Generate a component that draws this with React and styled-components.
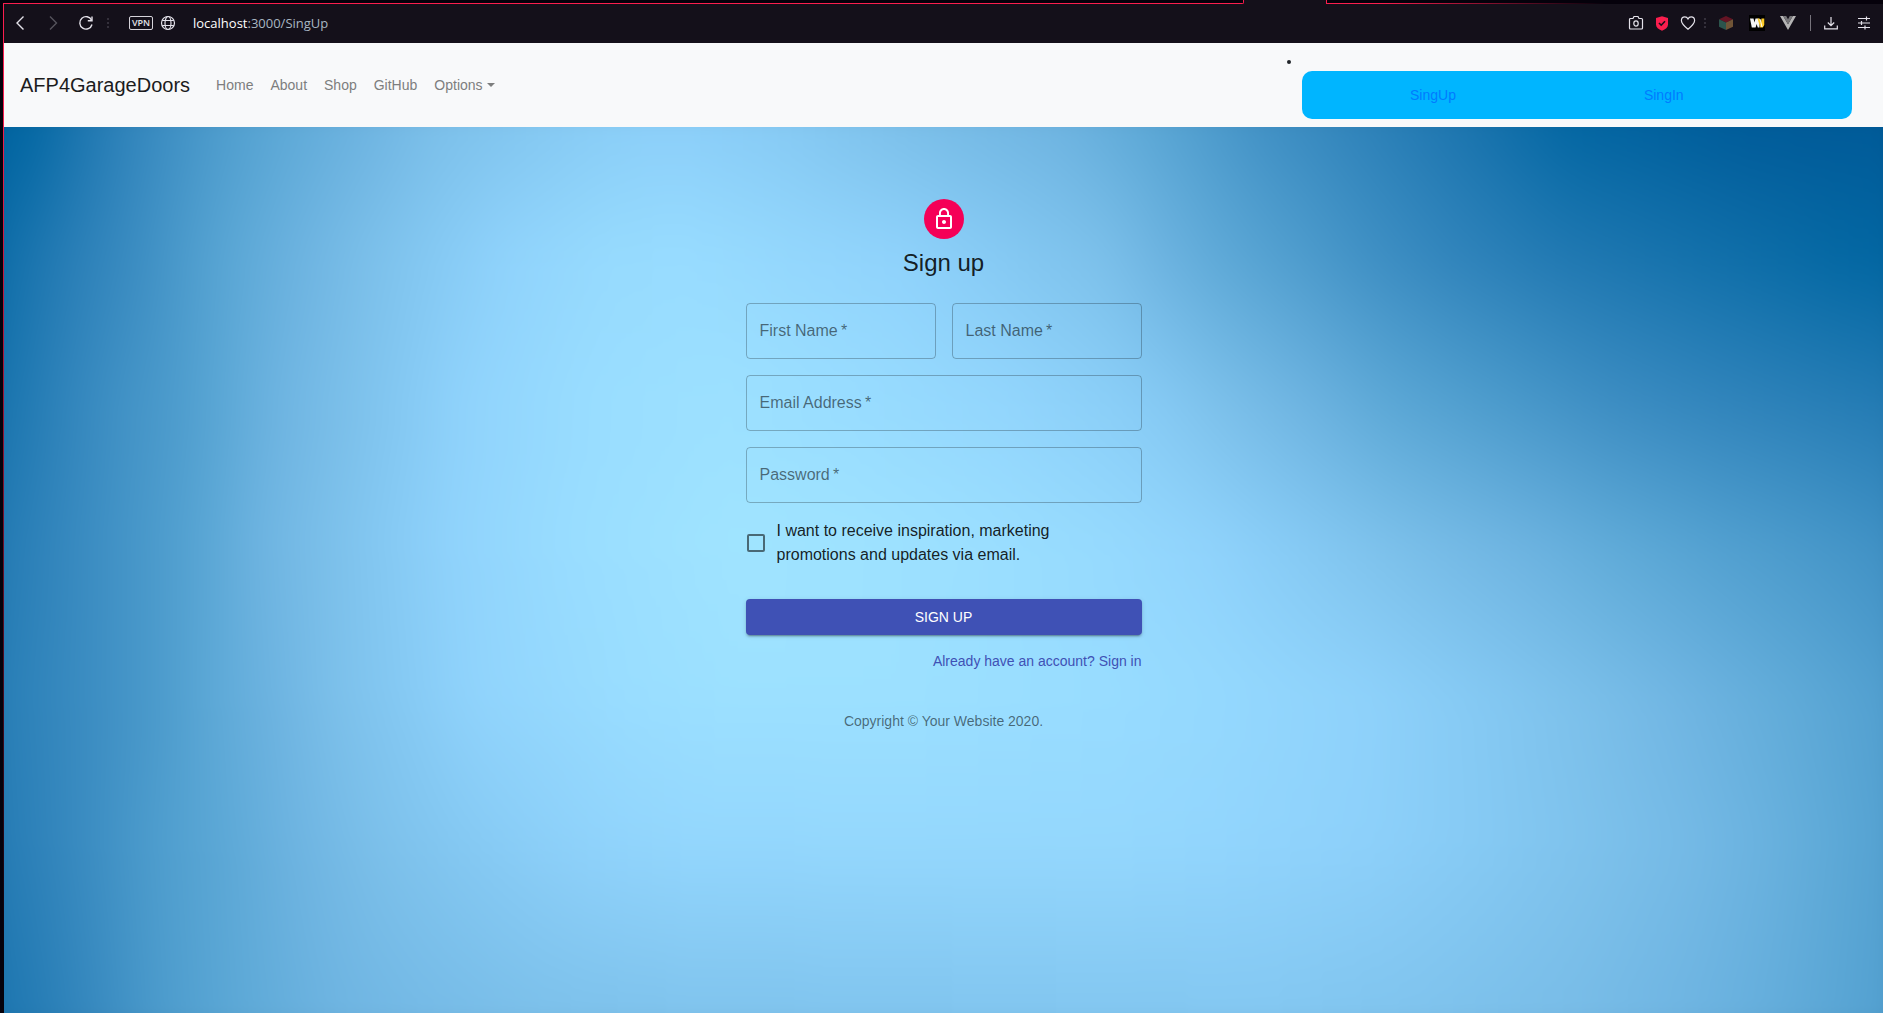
import React from "react";
import styled, { createGlobalStyle } from "styled-components";

const GlobalStyle = createGlobalStyle`
  *, *::before, *::after { box-sizing: border-box; }
  body {
    margin: 0;
    background: #05010b;
    font-family: "Liberation Sans", Arial, sans-serif;
    font-size: 14px;
    line-height: 20px;
    color: #212529;
  }
  button { font: inherit; border: 0; padding: 0; background: none; cursor: pointer; }
  a { text-decoration: none; }
  ul { list-style: none; margin: 0; padding: 0; }
`;

/* ---------- browser window ---------- */

const Window = styled.div`
  min-height: 100vh;
  display: flex;
  flex-direction: column;
`;

const TabStrip = styled.div`
  display: flex;
  height: 4px;
  padding-left: 3px;
`;

const TabsBefore = styled.div`
  width: 66%;
  border: solid #fa1e4e;
  border-width: 0 1px 1px 0;
  border-bottom-right-radius: 2px;
`;

const ActiveTab = styled.div`
  width: 82px;
  background: #14101a;
`;

const TabsAfter = styled.div`
  flex: 1;
  border-left: 1px solid #fa1e4e;
  background: linear-gradient(90deg, #fa1e4e 10%, #05010b 50%) bottom / 100% 1px no-repeat;
`;

const WindowBody = styled.div`
  flex: 1;
  display: grid;
  grid-template-columns: 4px minmax(0, 1fr);
`;

const WindowEdge = styled.div`
  background: linear-gradient(#fa1e4e 10%, #5a0c22 60%, #05010b 95%) right / 1px 100% no-repeat;
`;

const Viewport = styled.div`
  display: flex;
  flex-direction: column;
`;

const Toolbar = styled.div`
  display: flex;
  align-items: center;
  justify-content: space-between;
  height: 39px;
  padding: 0 11px 1px 8px;
  background: #14101a;
  color: #e4e2ea;
`;

const ToolGroup = styled.div`
  display: flex;
  align-items: center;
  gap: ${(p) => p.$gap}px;
`;

const ToolButton = styled.button`
  display: flex;
  width: 16px;
  height: 16px;
  color: ${(p) => (p.$dim ? "#56535c" : "#e4e2ea")};

  svg { width: 16px; height: 16px; display: block; }
`;

const Dots = styled.span`
  width: 2px;
  height: 10px;
  background: repeating-linear-gradient(#34303b 0 2px, transparent 2px 4px);
`;

const Divider = styled.span`
  width: 1px;
  height: 16px;
  background: #77747c;
`;

const VpnBadge = styled.button`
  width: 24px;
  height: 14px;
  border: 1px solid #d5d3da;
  border-radius: 2px;
  color: #e4e2ea;
  font-family: "Open Sans", sans-serif;
  font-size: 9px;
  font-weight: 600;
  line-height: 12px;
`;

const Address = styled.div`
  font-family: "Open Sans", "Noto Sans", sans-serif;
  font-size: 13px;
  color: #a9b6c2;

  strong { font-weight: 400; color: #ffffff; }
`;

/* ---------- site navigation ---------- */

const NavBar = styled.nav`
  display: flex;
  align-items: center;
  justify-content: space-between;
  padding: 8px 31px 8px 16px;
  background: #f8f9fa;
`;

const NavLeft = styled.div`
  display: flex;
  align-items: center;
  gap: 18px;
`;

const Brand = styled.a`
  font-size: 20px;
  line-height: 30px;
  color: #1c1c1d;
`;

const NavList = styled.ul`
  display: flex;
  gap: 1px;
`;

const NavLink = styled.a`
  display: flex;
  align-items: center;
  gap: 4px;
  padding: 8px;
  color: #7d7e7e;
`;

const Caret = styled.span`
  border: solid transparent;
  border-width: 4px 4px 0;
  border-top-color: currentColor;
`;

const Account = styled.div`
  display: flex;
  align-items: flex-start;
  gap: 11px;
`;

const Bullet = styled.span`
  width: 4px;
  height: 4px;
  margin-top: 9px;
  border-radius: 50%;
  background: #212529;
`;

const AccountLinks = styled.div`
  display: flex;
  align-items: center;
  gap: 188px;
  width: 550px;
  height: 48px;
  margin-top: 20px;
  padding-left: 108px;
  border-radius: 10px;
  background: #00b5ff;

  a { color: #007bff; }
`;

/* ---------- sign-up page ---------- */

const Page = styled.main`
  position: relative;
  isolation: isolate;
  flex: 1;
  padding: 72px 16px 80px;
`;

const Backdrop = styled.div`
  position: absolute;
  inset: 0;
  z-index: -1;
  overflow: hidden;
`;

/* Reaches past the page on every side so that the softened rim stays out of view. */
const SoftLayer = styled.div`
  position: absolute;
  inset: -40px;
  filter: blur(20px);
`;

const Sheet = styled.div`
  position: absolute;
  inset: 0;
  background: ${(p) => p.$fill};
  mask-image: ${(p) => p.$mask};
`;

const Card = styled.div`
  width: 100%;
  max-width: 396px;
  margin: 0 auto;
  display: flex;
  flex-direction: column;
  align-items: center;
`;

const Avatar = styled.div`
  display: grid;
  place-items: center;
  width: 40px;
  height: 40px;
  border-radius: 50%;
  background: #f50057;

  svg { width: 24px; height: 24px; fill: #ffffff; }
`;

const Title = styled.h1`
  margin: 8px 0 24px;
  font-size: 24px;
  line-height: 32px;
  font-weight: 400;
  color: rgba(0, 0, 0, 0.87);
`;

const Form = styled.form`
  width: 100%;
  display: grid;
  grid-template-columns: 1fr 1fr;
  gap: 16px;
`;

const FieldBox = styled.div`
  display: grid;
  align-items: center;
  grid-column: ${(p) => (p.$wide ? "1 / -1" : "auto")};
`;

const FieldLabel = styled.label`
  grid-area: 1 / 1;
  padding-left: 14px;
  font-size: 16px;
  color: rgba(0, 0, 0, 0.54);
  pointer-events: none;
`;

const FieldInput = styled.input`
  grid-area: 1 / 1;
  width: 100%;
  height: 56px;
  padding: 0 13px;
  border: 1px solid rgba(0, 0, 0, 0.25);
  border-radius: 4px;
  background: transparent;
  font: inherit;
  font-size: 16px;
`;

const Consent = styled.label`
  grid-column: 1 / -1;
  display: flex;
  align-items: center;
  gap: 12px;
  padding-left: 1px;
  font-size: 16px;
  line-height: 24px;
  color: rgba(0, 0, 0, 0.87);

  input {
    appearance: none;
    flex: none;
    width: 18px;
    height: 18px;
    margin: 0;
    border: 2px solid rgba(0, 0, 0, 0.54);
    border-radius: 2px;
  }

  span { max-width: 300px; }
`;

const Submit = styled.button`
  && {
    grid-column: 1 / -1;
    height: 36px;
    margin-top: 16px;
    border-radius: 4px;
    background: #3f51b5;
    color: #ffffff;
    text-transform: uppercase;
    box-shadow: 0 3px 1px -2px rgba(0, 0, 0, 0.2), 0 2px 2px rgba(0, 0, 0, 0.14),
      0 1px 5px rgba(0, 0, 0, 0.12);
  }
`;

const SignInLink = styled.a`
  grid-column: 1 / -1;
  justify-self: end;
  color: #3f51b5;
`;

const Copyright = styled.p`
  margin: 40px 0 0;
  color: rgba(0, 0, 0, 0.54);
`;

/* ---------- backdrop colours ---------- */

const SHADES = [
  [0, 90, 152], [0, 102, 162], [26, 116, 174], [44, 128, 184], [60, 141, 194],
  [76, 155, 204], [92, 168, 214], [110, 180, 225], [124, 192, 234], [134, 202, 244],
  [144, 211, 252], [153, 221, 255], [160, 228, 255],
];

function shade(level) {
  const i = Math.min(Math.floor(level), SHADES.length - 2);
  const t = level - i;
  const c = SHADES[i].map((v, k) => Math.round(v + (SHADES[i + 1][k] - v) * t));
  return `rgb(${c.join(",")})`;
}

// Each row: its height on the backdrop in percent, then [x percent, shade level] stops.
const ROWS = [
  [4, [[0, 0.5], [3, 1], [5.7, 2], [8.5, 3.4], [12.7, 5], [16, 6], [20.5, 7], [24.2, 8], [32, 9.3], [36, 9.7], [41.4, 9.1], [47.8, 8], [56, 7], [60.5, 6], [66.4, 4.3], [71.4, 3.2], [76.5, 2.1], [82, 1.1], [91, 0.2], [100, 0]]],
  [18, [[0, 0.9], [3.2, 2], [5.8, 3], [8.8, 4], [11.2, 5], [13.8, 6], [17.3, 7], [20.7, 8], [24.2, 9], [27.6, 10], [33, 10.8], [37.2, 10.9], [42.5, 10.4], [47.8, 10], [53, 9], [58.4, 8], [61, 7], [64.3, 6.1], [68.5, 5.1], [71.7, 4.3], [76, 3.4], [81.3, 2.5], [87, 1.9], [95.6, 1.2], [100, 0.9]]],
  [33, [[0, 1.6], [2.7, 2.3], [5.3, 3.4], [8.5, 4.5], [10.6, 5], [13.3, 6], [16, 7], [19.6, 8], [22.8, 9], [25.5, 10], [32, 11], [39, 11.6], [45, 11], [53, 10.3], [58.4, 9.5], [61, 9], [64.3, 8], [68.5, 7], [72.8, 6], [78.6, 5], [84, 4.1], [89.8, 3.4], [95.6, 2.8], [100, 2.4]]],
  [48, [[0, 2], [3.2, 3], [6.4, 4], [9.8, 5], [12.7, 6], [15.1, 7], [18.6, 8], [21.8, 9], [25, 10], [31, 11], [39, 12], [45, 11.9], [50.5, 11.4], [58.4, 10.7], [63.7, 10], [67.4, 9.2], [73.3, 8], [79.7, 7], [84, 6.3], [90.3, 5.4], [95.6, 4.7], [100, 4]]],
  [64, [[0, 2.3], [3.2, 3.2], [6.4, 4], [10, 5], [12.5, 6], [16, 7], [19, 8], [22.8, 9], [26, 10], [34, 11], [39, 11.4], [47.8, 11.4], [58.4, 10.9], [63.7, 10.6], [71.7, 9.9], [77, 9], [82.3, 8.1], [87.6, 7.2], [92.4, 6.4], [96, 5.8], [100, 5]]],
  [79, [[0, 2.2], [3.2, 3], [6.4, 4], [10, 5.2], [13.3, 6], [17, 7], [21.2, 8], [26.6, 9], [32, 9.9], [37, 10.3], [47.8, 10.4], [58.4, 10.4], [63.7, 10.2], [71.7, 9.7], [77, 9], [82.8, 8.2], [88, 7.5], [91.9, 6.8], [96, 6], [100, 5.1]]],
  [96, [[0, 1.8], [3.2, 2.5], [6.4, 3.6], [10, 5], [13.8, 6], [19, 7], [23.4, 7.5], [29.7, 8], [37, 8.3], [47.8, 8.4], [58.4, 8.6], [66.4, 8.7], [74.3, 8.3], [82.3, 7.7], [87.6, 7.1], [91.9, 6.5], [96, 5.8], [100, 5]]],
];

function WaterBackdrop() {
  return (
    <Backdrop aria-hidden="true">
      <SoftLayer>
        {ROWS.map(([y, stops], i) => (
          <Sheet
            key={y}
            $fill={`linear-gradient(90deg, ${stops.map(([x, l]) => `${shade(l)} ${x}%`).join(", ")})`}
            $mask={i === 0 ? "none" : `linear-gradient(transparent ${ROWS[i - 1][0]}%, #000 ${y}%)`}
          />
        ))}
      </SoftLayer>
    </Backdrop>
  );
}

/* ---------- icons ---------- */

const Line = ({ children, width = 1.2 }) => (
  <svg viewBox="0 0 16 16" fill="none" stroke="currentColor" strokeWidth={width} aria-hidden="true">
    {children}
  </svg>
);

const icons = {
  back: <Line width={1.4}><path d="M11.5 1.5 5 8l6.5 6.5" /></Line>,
  forward: <Line width={1.4}><path d="M5 1.5 11.5 8 5 14.5" /></Line>,
  reload: (
    <Line width={1.4}>
      <path d="M13.6 5.2A6.2 6.200 0 1 0 14 9.500" />
      <path d="M14 1.500V5.700H9.800" />
    </Line>
  ),
  globe: (
    <Line>
      <circle cx="8" cy="8" r="6.5" />
      <ellipse cx="8" cy="8" rx="3" ry="6.5" />
      <path d="M2.2 5.5h11.6M2.2 10.5h11.6" />
    </Line>
  ),
  camera: (
    <Line>
      <path d="M2.5 3.5H5l1-2h4l1 2h2.5a1 1 0 0 1 1 1v8.5a1 1 0 0 1-1 1h-11a1 1 0 0 1-1-1V4.500a1 1 0 0 1 1-1Z" />
      <ellipse cx="8" cy="8.5" rx="2.2" ry="2.6" />
    </Line>
  ),
  shield: (
    <svg viewBox="0 0 16 16" aria-hidden="true">
      <path d="M8 1.2 14 3v6.5c0 2.8-2.5 4.8-6 6.3-3.5-1.5-6-3.5-6-6.3V3Z" fill="#fa1e4e" />
      <path d="m5 8 2.2 2.2L11 6.3" fill="none" stroke="#14101a" strokeWidth="1.6" />
    </svg>
  ),
  heart: (
    <Line>
      <path d="M8 14.3C4.5 11.5 1.4 8.9 1.4 5.600 1.4 3.3 3 1.8 4.9 1.8c1.4 0 2.5.8 3.1 2.1.6-1.3 1.7-2.1 3.1-2.1 1.9 0 3.5 1.5 3.5 3.8 0 3.3-3.1 5.9-6.6 8.700Z" />
    </Line>
  ),
  cube: (
    <svg viewBox="0 0 16 16" aria-hidden="true">
      <path d="M8 1 15 4.3 8 7.6 1 4.3Z" fill="#651424" />
      <path d="M1 4.3 8 7.6V15L1 11.7Z" fill="#2b544c" />
      <path d="M15 4.3 8 7.6V15l7-3.3Z" fill="#705436" />
    </svg>
  ),
  w: (
    <svg viewBox="0 0 16 16" aria-hidden="true">
      <path d="M0 0h16v16H0Z" fill="#000" />
      <path d="M1 3.5h3.5l1 4 1-4h3l1 4V12.500H8.8L7.6 9l-1 3.5H2.8Z" fill="#f4f4f4" />
      <path d="M8.5 3.5h2.2l1.2 4.5.6-4.5h2.8v6.5l-1.5 2.5h-2.6Z" fill="#fbc927" />
      <path d="m11 4 2 8" stroke="#fff" strokeWidth="1" />
    </svg>
  ),
  v: (
    <svg viewBox="0 0 16 16" aria-hidden="true">
      <path d="M0 1h3.2L8 9.3 12.8 1H16L8 15Z" fill="#b5b4b5" />
      <path d="M3.2 1h3L8 4.2 9.8 1h3L8 9.3Z" fill="#777679" />
    </svg>
  ),
  download: (
    <Line>
      <path d="M8 2v8.5M4.8 7.5 8 10.7l3.2-3.2M1.7 10.5v3.3h12.6v-3.3" />
    </Line>
  ),
  sliders: (
    <Line>
      <path d="M2 3.5h12M2 8h12M2 12.5h12M10.5 1.5v4M5.5 6v4M9 10.5v4" />
    </Line>
  ),
};

const Tool = ({ icon, label, dim }) => (
  <ToolButton type="button" aria-label={label} $dim={dim}>{icons[icon]}</ToolButton>
);

const Field = ({ id, label, type = "text", wide }) => (
  <FieldBox $wide={wide}>
    <FieldInput id={id} name={id} type={type} required />
    <FieldLabel htmlFor={id}>{label}{"\u2009*"}</FieldLabel>
  </FieldBox>
);

export default function App() {
  return (
    <Window>
      <GlobalStyle />
      <TabStrip>
        <TabsBefore />
        <ActiveTab />
        <TabsAfter />
      </TabStrip>
      <WindowBody>
        <WindowEdge />
        <Viewport>
          <Toolbar>
            <ToolGroup $gap={13}>
              <ToolGroup $gap={17}>
                <Tool icon="back" label="Back" />
                <Tool icon="forward" label="Forward" dim />
                <Tool icon="reload" label="Reload" />
              </ToolGroup>
              <ToolGroup $gap={17}>
                <ToolGroup $gap={7}>
                  <ToolGroup $gap={20}>
                    <Dots />
                    <VpnBadge type="button">VPN</VpnBadge>
                  </ToolGroup>
                  <Tool icon="globe" label="Site information" />
                </ToolGroup>
                <Address><strong>localhost</strong>:3000/SingUp</Address>
              </ToolGroup>
            </ToolGroup>
            <ToolGroup $gap={14}>
              <ToolGroup $gap={12}>
                <ToolGroup $gap={8}>
                  <ToolGroup $gap={10}>
                    <Tool icon="camera" label="Snapshot" />
                    <Tool icon="shield" label="Ad blocker" />
                    <Tool icon="heart" label="Bookmark" />
                  </ToolGroup>
                  <Dots />
                </ToolGroup>
                <ToolGroup $gap={15}>
                  <Tool icon="cube" label="Cube extension" />
                  <Tool icon="w" label="W extension" />
                  <Tool icon="v" label="Vue extension" />
                </ToolGroup>
              </ToolGroup>
              <ToolGroup $gap={12}>
                <Divider />
                <ToolGroup $gap={17}>
                  <Tool icon="download" label="Downloads" />
                  <Tool icon="sliders" label="Easy setup" />
                </ToolGroup>
              </ToolGroup>
            </ToolGroup>
          </Toolbar>

          <NavBar>
            <NavLeft>
              <Brand href="#home">AFP4GarageDoors</Brand>
              <NavList>
                <li><NavLink href="#home">Home</NavLink></li>
                <li><NavLink href="#about">About</NavLink></li>
                <li><NavLink href="#shop">Shop</NavLink></li>
                <li><NavLink href="#github">GitHub</NavLink></li>
                <li><NavLink href="#options">Options<Caret /></NavLink></li>
              </NavList>
            </NavLeft>
            <Account>
              <Bullet />
              <AccountLinks>
                <a href="#singup">SingUp</a>
                <a href="#singin">SingIn</a>
              </AccountLinks>
            </Account>
          </NavBar>

          <Page>
            <WaterBackdrop />
            <Card>
              <Avatar>
                <svg viewBox="0 0 24 24" aria-hidden="true">
                  <path d="M12 17c1.1 0 2-.9 2-2s-.9-2-2-2-2 .9-2 2 .9 2 2 2zm6-9h-1V6c0-2.76-2.24-5-5-5S7 3.24 7 6v2H6c-1.1 0-2 .9-2 2v10c0 1.1.9 2 2 2h12c1.1 0 2-.9 2-2V10c0-1.1-.9-2-2-2zM8.9 6c0-1.71 1.39-3.1 3.1-3.1s3.1 1.39 3.1 3.1v2H8.9V6zM18 20H6V10h12v10z" />
                </svg>
              </Avatar>
              <Title>Sign up</Title>
              <Form onSubmit={(e) => e.preventDefault()}>
                <Field id="firstName" label="First Name" />
                <Field id="lastName" label="Last Name" />
                <Field id="email" label="Email Address" type="email" wide />
                <Field id="password" label="Password" type="password" wide />
                <Consent>
                  <input type="checkbox" name="allowExtraEmails" />
                  <span>I want to receive inspiration, marketing promotions and updates via email.</span>
                </Consent>
                <Submit type="submit">Sign Up</Submit>
                <SignInLink href="#singin">Already have an account? Sign in</SignInLink>
              </Form>
              <Copyright>Copyright © Your Website 2020.</Copyright>
            </Card>
          </Page>
        </Viewport>
      </WindowBody>
    </Window>
  );
}
